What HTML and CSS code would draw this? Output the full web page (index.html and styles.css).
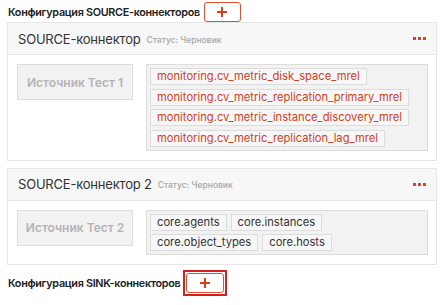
FILE: index.html
```html
<!DOCTYPE html>
<html lang="ru">
<head>
<meta charset="utf-8">
<link rel="stylesheet" href="styles.css">
</head>
<body>
<div class="page">
  <div class="section-head">
    <span class="section-title">Конфигурация SOURCE-коннекторов</span>
    <button class="add-btn"><svg width="10" height="10" viewBox="0 0 10 10"><path d="M5 0V10M0 5H10" stroke="currentColor" stroke-width="2"/></svg></button>
  </div>

  <div class="card">
    <div class="card-head">
      <span class="card-name">SOURCE-коннектор</span>
      <span class="card-status">Статус: Черновик</span>
      <span class="dots"><i></i><i></i><i></i></span>
    </div>
    <div class="card-body">
      <div class="source-box">Источник Тест 1</div>
      <div class="tags tags-col">
        <span class="tag red">monitoring.cv_metric_disk_space_mrel</span>
        <span class="tag red">monitoring.cv_metric_replication_primary_mrel</span>
        <span class="tag red">monitoring.cv_metric_instance_discovery_mrel</span>
        <span class="tag red">monitoring.cv_metric_replication_lag_mrel</span>
      </div>
    </div>
  </div>

  <div class="card">
    <div class="card-head">
      <span class="card-name">SOURCE-коннектор 2</span>
      <span class="card-status">Статус: Черновик</span>
      <span class="dots"><i></i><i></i><i></i></span>
    </div>
    <div class="card-body">
      <div class="source-box">Источник Тест 2</div>
      <div class="tags">
        <span class="tag">core.agents</span>
        <span class="tag">core.instances</span>
        <span class="tag">core.object_types</span>
        <span class="tag">core.hosts</span>
      </div>
    </div>
  </div>

  <div class="section-head sink">
    <span class="section-title">Конфигурация SINK-коннекторов</span>
    <span class="focus-ring"><button class="add-btn"><svg width="10" height="10" viewBox="0 0 10 10"><path d="M5 0V10M0 5H10" stroke="currentColor" stroke-width="2"/></svg></button></span>
  </div>
</div>
</body>
</html>
```

FILE: styles.css
```css
* { box-sizing: border-box; }
html, body { margin: 0; padding: 0; background: #fff; }
body {
  font-family: Inter, "Noto Sans", sans-serif;
  color: #222;
}
.page {
  padding: 2px 4px 0 7px;
  width: 441px;
}
.section-head {
  display: flex;
  align-items: center;
  gap: 4px;
  height: 20px;
  padding-left: 1px;
}
.section-title {
  font-size: 10.8px;
  font-weight: 600;
  color: #222;
  letter-spacing: -0.3px;
}
.add-btn {
  width: 37px;
  height: 20px;
  border: 1px solid #e0502e;
  border-radius: 3px;
  background: #fff;
  color: #dd3d1a;
  display: flex;
  align-items: center;
  justify-content: center;
  padding: 0;
}
.card {
  border: 1px solid #e6e6e6;
  width: 430px;
}
.card + .card { margin-top: 7px; }
.card-head {
  height: 32px;
  background: #f7f7f7;
  border-bottom: 1px solid #e6e6e6;
  display: flex;
  align-items: center;
  padding: 0 10px;
}
.card-name {
  font-size: 13px;
  color: #333;
  letter-spacing: -0.2px;
}
.card-status {
  font-size: 8.5px;
  font-weight: 500;
  color: #a6a6a6;
  margin-left: 6px;
  margin-top: 2px;
}
.dots {
  margin-left: auto;
  display: flex;
  gap: 2px;
}
.dots i {
  width: 3px;
  height: 3px;
  background: #e0401c;
  display: block;
}
.card-body {
  display: flex;
  align-items: flex-start;
  padding: 9px 8px 9px 9px;
  gap: 13px;
}
.source-box {
  width: 116px;
  height: 36px;
  flex: none;
  background: #f2f2f2;
  border: 1px solid #dcdcdc;
  display: flex;
  align-items: center;
  justify-content: center;
  font-size: 12px;
  font-weight: 600;
  color: #b4b4b4;
}
.tags {
  flex: 1;
  background: #f2f2f2;
  border: 1px solid #dcdcdc;
  padding: 3px;
  display: flex;
  flex-wrap: wrap;
  align-content: flex-start;
  gap: 3.5px 4px;
}
.tags-col {
  flex-direction: column;
  flex-wrap: nowrap;
  align-items: flex-start;
}
.tag {
  height: 17px;
  line-height: 15px;
  padding: 0 6px;
  border: 1px solid #dcdcdc;
  background: #f7f7f7;
  font-size: 11.2px;
  color: #333;
  white-space: nowrap;
}
.tag.red { color: #d1401f; }
.sink {
  margin-top: 5px;
  height: 26px;
}
.focus-ring {
  border: 2px solid #d42020;
  padding: 1px;
  display: flex;
  margin-left: -1px;
}
.focus-ring .add-btn { width: 38px; }
```
